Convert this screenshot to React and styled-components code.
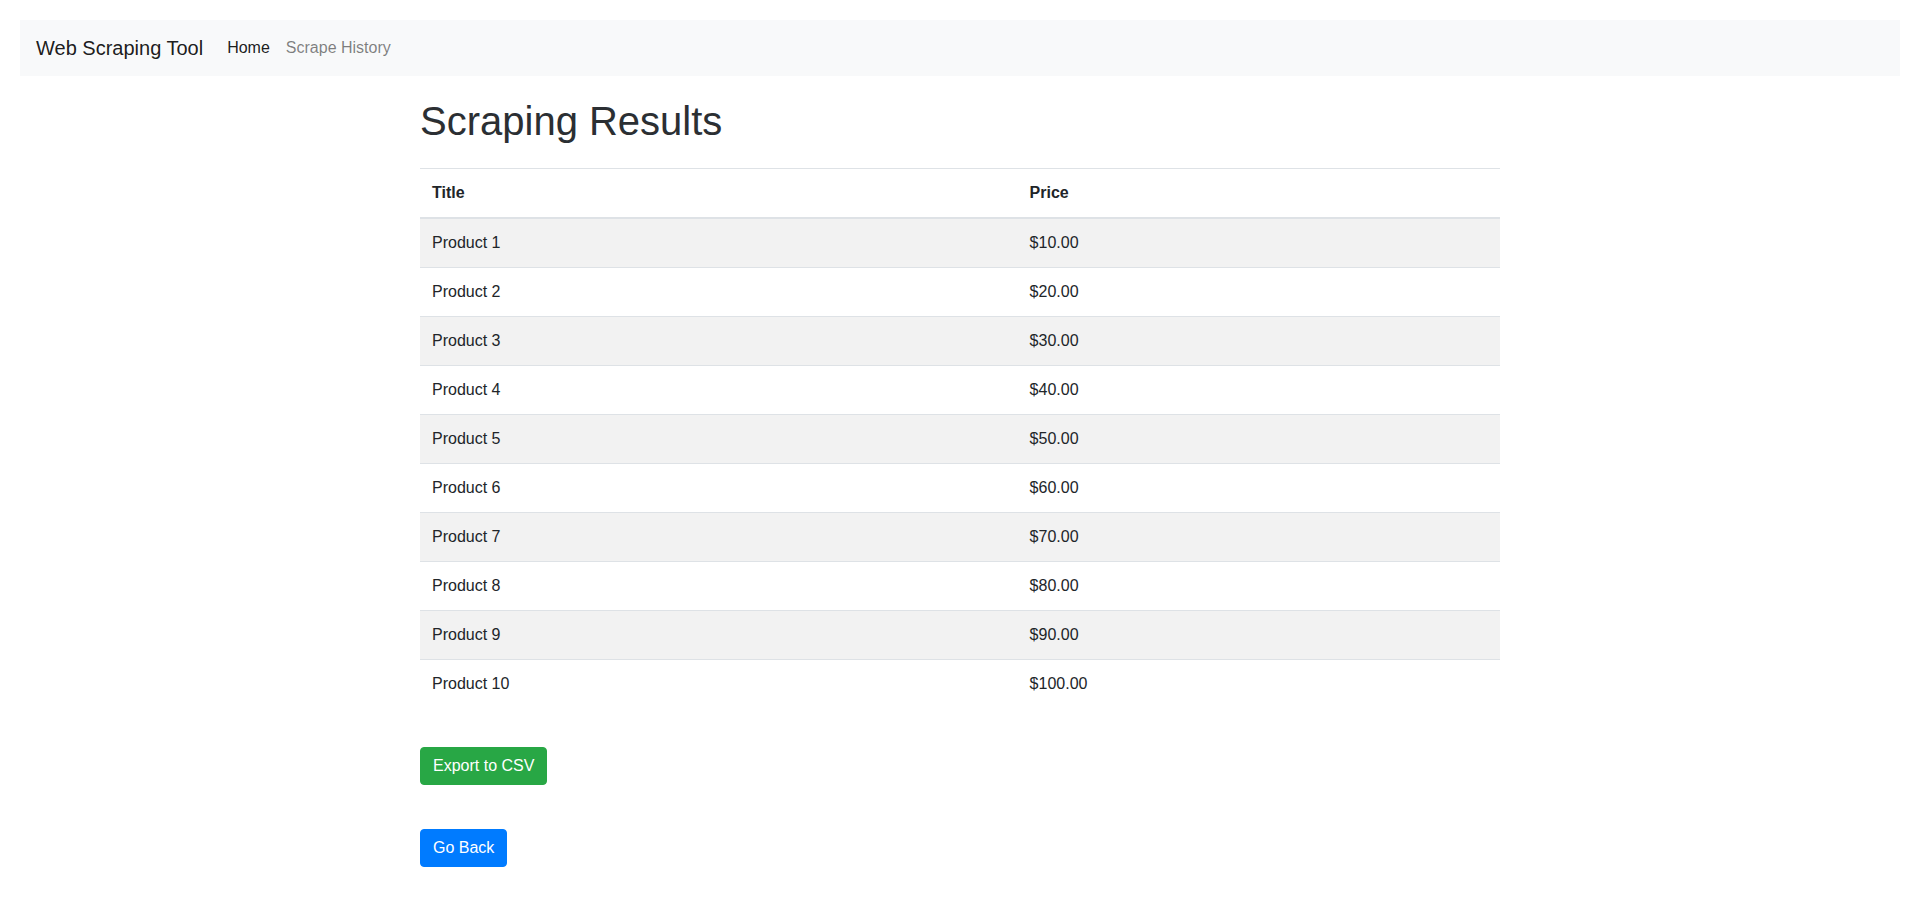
import React from "react";
import styled, { createGlobalStyle } from "styled-components";

const GlobalStyle = createGlobalStyle`
  *, *::before, *::after { box-sizing: border-box; }
  html, body { background: #fff; }
  body {
    margin: 20px;
    font-family: "Liberation Sans", Arial, sans-serif;
    font-size: 16px;
    line-height: 1.5;
    color: #212529;
  }
`;

const Navbar = styled.nav`
  display: flex;
  align-items: center;
  background: #f8f9fa;
  padding: 8px 16px;
  height: 56px;
`;

const Brand = styled.a`
  font-size: 20px;
  line-height: 30px;
  padding: 5px 0;
  margin-right: 16px;
  color: rgba(0, 0, 0, 0.9);
  text-decoration: none;
  white-space: nowrap;
`;

const NavList = styled.div`
  display: flex;
  align-items: center;
`;

const NavLink = styled.a`
  padding: 8px;
  line-height: 24px;
  text-decoration: none;
  color: ${(p) => (p.$active ? "rgba(0, 0, 0, 0.9)" : "rgba(0, 0, 0, 0.5)")};
`;

const Container = styled.main`
  max-width: 1110px;
  margin: 0 auto;
  padding: 0 15px;
`;

const Heading = styled.h1`
  font-size: 40px;
  font-weight: 400;
  line-height: 48px;
  margin: 21px 0 23px;
  color: #2b2f33;
`;

const Table = styled.table`
  width: 100%;
  border-collapse: collapse;
  margin-bottom: 16px;
  color: #212529;
`;

const HeadCell = styled.th`
  text-align: left;
  font-weight: 700;
  padding: 12px;
  vertical-align: bottom;
  border-top: 1px solid #dee2e6;
  border-bottom: 2px solid #dee2e6;
`;

const Row = styled.tr`
  background: ${(p) => (p.$striped ? "#f2f2f2" : "transparent")};
`;

const Cell = styled.td`
  padding: 12px;
  vertical-align: top;
  border-top: 1px solid #dee2e6;
`;

const Actions = styled.div`
  display: flex;
  flex-direction: column;
  align-items: flex-start;
  gap: 44px;
  margin-top: 39px;
`;

const Button = styled.a`
  display: inline-block;
  padding: 6px 12px;
  font-size: 16px;
  line-height: 24px;
  border-radius: 4px;
  color: #fff;
  text-decoration: none;
  background: ${(p) => (p.$variant === "success" ? "#28a745" : "#007bff")};
  border: 1px solid ${(p) => (p.$variant === "success" ? "#28a745" : "#007bff")};
  height: 38px;
`;

const products = Array.from({ length: 10 }, (_, i) => ({
  title: `Product ${i + 1}`,
  price: `$${((i + 1) * 10).toFixed(2)}`,
}));

export default function App() {
  return (
    <>
      <GlobalStyle />
      <Navbar>
        <Brand href="#">Web Scraping Tool</Brand>
        <NavList>
          <NavLink href="#" $active>Home</NavLink>
          <NavLink href="#">Scrape History</NavLink>
        </NavList>
      </Navbar>
      <Container>
        <Heading>Scraping Results</Heading>
        <Table>
          <thead>
            <tr>
              <HeadCell>Title</HeadCell>
              <HeadCell>Price</HeadCell>
            </tr>
          </thead>
          <tbody>
            {products.map((p, i) => (
              <Row key={p.title} $striped={i % 2 === 0}>
                <Cell>{p.title}</Cell>
                <Cell>{p.price}</Cell>
              </Row>
            ))}
          </tbody>
        </Table>
        <Actions>
          <Button href="#" $variant="success">Export to CSV</Button>
          <Button href="#" $variant="primary">Go Back</Button>
        </Actions>
      </Container>
    </>
  );
}
